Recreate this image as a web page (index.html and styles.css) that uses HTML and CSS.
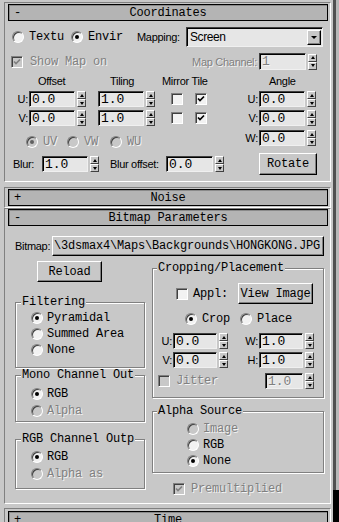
FILE: index.html
```html
<!DOCTYPE html>
<html lang="en">
<head>
  <meta charset="UTF-8">
  <meta name="viewport" content="width=device-width, initial-scale=1.0">
  <title>Bitmap Parameters</title>
  <link rel="stylesheet" href="styles.css">
</head>
<body>
  <div class="panel">
    <!-- Coordinates rollout -->
    <div class="rollout coords">
      <div class="bar"><span class="sign">-</span><span>Coordinates</span></div>

      <div class="row map-row">
        <label class="opt textu"><span class="radio"></span>Textu</label>
        <label class="opt envir"><span class="radio on"></span>Envir</label>
        <span class="lbl mapping">Mapping:</span>
        <div class="combo"><span class="combo-text">Screen</span><span class="combo-btn"></span></div>
      </div>

      <div class="row show-row">
        <label class="opt off show-map"><span class="check"><svg viewBox="0 0 8 8"><path d="M1 3.5 3 5.5 7 1.5"/></svg></span>Show Map on</label>
        <span class="lbl off channel">Map Channel:</span>
        <span class="field off channel-field">1</span>
        <span class="spin"><i></i><i></i></span>
      </div>

      <div class="xform">
        <div class="xform-left">
          <div class="row head-row">
            <span class="lbl head-offset">Offset</span>
            <span class="lbl head-tiling">Tiling</span>
            <span class="lbl">Mirror Tile</span>
          </div>
          <div class="row num-row">
            <span class="lbl axis">U:</span>
            <span class="field offset">0.0</span><span class="spin"><i></i><i></i></span>
            <span class="field tiling">1.0</span><span class="spin"><i></i><i></i></span>
            <span class="check mirror"></span>
            <span class="check tile"><svg viewBox="0 0 8 8"><path d="M1 3.5 3 5.5 7 1.5"/></svg></span>
          </div>
          <div class="row num-row">
            <span class="lbl axis">V:</span>
            <span class="field offset">0.0</span><span class="spin"><i></i><i></i></span>
            <span class="field tiling">1.0</span><span class="spin"><i></i><i></i></span>
            <span class="check mirror"></span>
            <span class="check tile"><svg viewBox="0 0 8 8"><path d="M1 3.5 3 5.5 7 1.5"/></svg></span>
          </div>
          <div class="row off plane-row">
            <label class="opt plane-uv"><span class="radio on"></span>UV</label>
            <label class="opt plane-vw"><span class="radio"></span>VW</label>
            <label class="opt"><span class="radio"></span>WU</label>
          </div>
          <div class="row blur-row">
            <span class="lbl blur-lbl">Blur:</span>
            <span class="field blur">1.0</span><span class="spin"><i></i><i></i></span>
            <span class="lbl blur-offset-lbl">Blur offset:</span>
            <span class="field blur-offset">0.0</span><span class="spin"><i></i><i></i></span>
          </div>
        </div>

        <div class="xform-right">
          <div class="row head-row"><span class="lbl head-angle">Angle</span></div>
          <div class="row num-row">
            <span class="lbl axis angle-axis">U:</span>
            <span class="field angle">0.0</span><span class="spin"><i></i><i></i></span>
          </div>
          <div class="row num-row">
            <span class="lbl axis angle-axis">V:</span>
            <span class="field angle">0.0</span><span class="spin"><i></i><i></i></span>
          </div>
          <div class="row num-row w-row">
            <span class="lbl axis angle-axis">W:</span>
            <span class="field angle">0.0</span><span class="spin"><i></i><i></i></span>
          </div>
          <button class="btn rotate">Rotate</button>
        </div>
      </div>
    </div>

    <!-- Noise rollout (closed) -->
    <div class="rollout noise">
      <div class="bar"><span class="sign">+</span><span>Noise</span></div>
    </div>

    <!-- Bitmap Parameters rollout -->
    <div class="rollout bitmap">
      <div class="bar"><span class="sign">-</span><span>Bitmap Parameters</span></div>

      <div class="row bm-row">
        <span class="lbl bm-lbl">Bitmap:</span>
        <button class="btn path">\3dsmax4\Maps\Backgrounds\HONGKONG.JPG</button>
      </div>

      <div class="bm-cols">
        <div class="bm-left">
          <button class="btn reload">Reload</button>

          <div class="group filtering">
            <div class="group-title">Filtering</div>
            <label class="opt grow"><span class="radio on"></span>Pyramidal</label>
            <label class="opt grow"><span class="radio"></span>Summed Area</label>
            <label class="opt grow"><span class="radio"></span>None</label>
          </div>

          <div class="group mono-out">
            <div class="group-title">Mono Channel Out</div>
            <label class="opt grow tall"><span class="radio on"></span>RGB</label>
            <label class="opt grow tall off"><span class="radio"></span>Alpha</label>
          </div>

          <div class="group rgb-out">
            <div class="group-title">RGB Channel Outp</div>
            <label class="opt grow tall"><span class="radio on"></span>RGB</label>
            <label class="opt grow tall off"><span class="radio"></span>Alpha as</label>
          </div>
        </div>

        <div class="bm-right">
          <div class="group cropping">
            <div class="group-title">Cropping/Placement</div>
            <div class="row apply-row">
              <label class="opt apply"><span class="check"></span>Appl:</label>
              <button class="btn view">View Image</button>
            </div>
            <div class="row crop-row">
              <label class="opt crop"><span class="radio on"></span>Crop</label>
              <label class="opt"><span class="radio"></span>Place</label>
            </div>
            <div class="row num-row crop-num">
              <span class="lbl axis crop-axis">U:</span>
              <span class="field crop-field">0.0</span><span class="spin"><i></i><i></i></span>
              <span class="lbl axis size-axis">W:</span>
              <span class="field crop-field">1.0</span><span class="spin"><i></i><i></i></span>
            </div>
            <div class="row num-row crop-num-v">
              <span class="lbl axis crop-axis">V:</span>
              <span class="field crop-field">0.0</span><span class="spin"><i></i><i></i></span>
              <span class="lbl axis size-axis">H:</span>
              <span class="field crop-field">1.0</span><span class="spin"><i></i><i></i></span>
            </div>
            <div class="row jitter-row">
              <label class="opt off jitter"><span class="check"></span>Jitter</label>
              <span class="field off jitter-field">1.0</span><span class="spin"><i></i><i></i></span>
            </div>
          </div>

          <div class="group alpha-src">
            <div class="group-title">Alpha Source</div>
            <label class="opt arow off"><span class="radio"></span>Image</label>
            <label class="opt arow"><span class="radio"></span>RGB</label>
            <label class="opt arow"><span class="radio on"></span>None</label>
          </div>

          <label class="opt off premult"><span class="check"><svg viewBox="0 0 8 8"><path d="M1 3.5 3 5.5 7 1.5"/></svg></span>Premultiplied</label>
        </div>
      </div>
    </div>

    <!-- Time rollout (closed, cut off) -->
    <div class="rollout time">
      <div class="bar"><span class="sign">+</span><span>Time</span></div>
    </div>
  </div>

  <div class="strip">
    <div class="track"></div>
    <div class="thumb"></div>
  </div>
</body>
</html>
```

FILE: styles.css
```css
body {
  margin: 0;
  width: 339px;
  height: 522px;
  overflow: hidden;
  display: flex;
  background-color: #c8c8c8;
  color: #000;
  font-family: "Liberation Mono", monospace;
  font-size: 12px;
  letter-spacing: -0.2px;
}
.panel {
  width: 331px;
  padding: 2px 0 0 4px;
  box-sizing: border-box;
}
.strip {
  width: 8px;
  padding-left: 2px;
  box-sizing: border-box;
  display: flex;
  flex-direction: column;
}
.track {
  flex: 1;
  border-left: 3px solid #505050;
  background-color: #b8b8b8;
}
.thumb {
  height: 32px;
  background-color: #000;
}

/* rollouts */
.rollout {
  border: 1px solid;
  border-color: #808080 #fff #fff #808080;
  padding: 1px 2px 1px 3px;
}
.coords {
  padding-bottom: 6px;
}
.noise {
  margin-top: 5px;
}
.bitmap {
  padding-top: 0;
  padding-bottom: 6px;
}
.time {
  margin-top: 4px;
  padding-top: 2px;
}
.bar {
  height: 17px;
  box-sizing: border-box;
  border: 1px solid #000;
  background-color: #b4b4b4;
  box-shadow: inset 1px 1px 0 #8a8a8a;
  display: grid;
  grid-template-columns: 1fr auto 1fr;
  align-items: center;
  line-height: 14px;
}
.sign {
  padding-left: 5px;
}

/* generic controls */
.row {
  display: flex;
  align-items: center;
}
.lbl {
  font-family: "Liberation Sans", Arial, sans-serif;
  font-size: 11px;
  letter-spacing: -0.3px;
  white-space: nowrap;
}
.opt {
  display: flex;
  align-items: center;
  gap: 5px;
  white-space: nowrap;
}
.off {
  color: #808080;
  text-shadow: 1px 1px 0 #f4f4f4;
}
.radio {
  flex: none;
  width: 12px;
  height: 12px;
  box-sizing: border-box;
  border-radius: 50%;
  border: 1px solid;
  border-color: #808080 #fff #fff #808080;
  box-shadow: inset 1px 1px 0 #404040;
  background-color: #f2f2f2;
  display: flex;
  align-items: center;
  justify-content: center;
}
.radio.on::after {
  content: "";
  width: 4px;
  height: 4px;
  border-radius: 50%;
  background-color: #000;
}
.off .radio {
  background-color: #c8c8c8;
}
.off .radio.on::after {
  background-color: #606060;
}
.check {
  flex: none;
  width: 12px;
  height: 12px;
  box-sizing: border-box;
  border: 1px solid;
  border-color: #808080 #fff #fff #808080;
  box-shadow: inset 1px 1px 0 #404040;
  background-color: #f2f2f2;
  display: flex;
  align-items: center;
  justify-content: center;
}
.check svg {
  width: 8px;
  height: 8px;
  fill: none;
  stroke: #000;
  stroke-width: 1.7;
}
.off .check {
  background-color: #c8c8c8;
}
.off .check svg {
  stroke: #808080;
}
.field {
  height: 16px;
  box-sizing: border-box;
  border: 1px solid;
  border-color: #404040 #f0f0f0 #f0f0f0 #404040;
  box-shadow: inset 1px 1px 0 #000;
  background-color: #e6e6e6;
  padding-left: 2px;
  font-size: 13px;
  line-height: 15px;
  letter-spacing: 0;
  overflow: hidden;
  white-space: nowrap;
}
.spin {
  flex: none;
  width: 9px;
  height: 16px;
  margin-left: 2px;
  display: flex;
  flex-direction: column;
}
.spin i {
  flex: 1;
  box-sizing: border-box;
  border: 1px solid;
  border-color: #fff #404040 #404040 #fff;
  background-color: #c8c8c8;
  display: flex;
  align-items: center;
  justify-content: center;
}
.spin i::after {
  content: "";
  border-left: 2px solid transparent;
  border-right: 2px solid transparent;
}
.spin i:first-child::after {
  border-bottom: 3px solid #000;
}
.spin i:last-child::after {
  border-top: 3px solid #000;
}
.btn {
  margin: 0;
  padding: 0;
  box-sizing: border-box;
  border: 1px solid;
  border-color: #fff #000 #000 #fff;
  box-shadow: inset -1px -1px 0 #808080;
  background-color: #c8c8c8;
  font: inherit;
  letter-spacing: inherit;
  color: inherit;
  display: flex;
  align-items: center;
  justify-content: center;
  white-space: nowrap;
}
.combo {
  width: 137px;
  height: 20px;
  box-sizing: border-box;
  border: 1px solid;
  border-color: #404040 #f0f0f0 #f0f0f0 #404040;
  box-shadow: inset 1px 1px 0 #000;
  background-color: #e6e6e6;
  padding: 0 1px 0 3px;
  display: flex;
  align-items: center;
  justify-content: space-between;
}
.combo-text {
  font-family: "Liberation Sans", Arial, sans-serif;
  font-size: 12px;
  letter-spacing: -0.4px;
}
.combo-btn {
  width: 14px;
  height: 15px;
  box-sizing: border-box;
  border: 1px solid;
  border-color: #fff #000 #000 #fff;
  box-shadow: inset -1px -1px 0 #808080;
  background-color: #c8c8c8;
  display: flex;
  align-items: center;
  justify-content: center;
}
.combo-btn::after {
  content: "";
  border-left: 3px solid transparent;
  border-right: 3px solid transparent;
  border-top: 3px solid #000;
}

/* coordinates */
.map-row {
  height: 20px;
  margin-top: 6px;
  padding-left: 4px;
}
.textu { width: 59px; }
.envir { width: 66px; }
.mapping { width: 49px; }
.show-row {
  height: 17px;
  margin-top: 6px;
  padding-left: 3px;
}
.show-map {
  width: 179px;
  gap: 7px;
}
.channel {
  width: 69px;
  padding-right: 2px;
  box-sizing: border-box;
  text-align: right;
}
.channel-field {
  width: 47px;
  height: 17px;
}
.xform {
  display: flex;
  margin-top: 4px;
}
.xform-left { width: 227px; }
.xform-right { width: 93px; }
.head-row { height: 14px; }
.xform-left .head-row { padding-left: 30px; }
.head-offset { width: 72px; }
.head-tiling { width: 52px; }
.head-angle { padding-left: 34px; }
.num-row {
  height: 16px;
  margin-top: 3px;
}
.w-row { margin-top: 4px; }
.axis {
  width: 21px;
  padding-right: 1px;
  box-sizing: border-box;
  text-align: right;
}
.angle-axis { width: 24px; }
.offset, .tiling, .angle, .blur { width: 46px; }
.tiling { margin-left: 12px; }
.mirror { margin-left: 16px; }
.tile { margin-left: 12px; }
.plane-row {
  height: 12px;
  margin-top: 10px;
  padding-left: 18px;
}
.plane-uv { width: 41px; }
.plane-vw { width: 43px; }
.blur-row {
  height: 16px;
  margin-top: 8px;
  padding-left: 5px;
}
.blur-lbl { width: 29px; }
.blur-offset-lbl {
  width: 56px;
  margin-left: 11px;
}
.blur-offset { width: 47px; }
.rotate {
  width: 58px;
  height: 22px;
  margin: 7px 0 0 24px;
}

/* bitmap parameters */
.bm-row {
  height: 20px;
  margin-top: 10px;
}
.bm-lbl {
  width: 44px;
  padding-left: 7px;
  box-sizing: border-box;
}
.path {
  width: 272px;
  height: 20px;
  justify-content: flex-start;
  padding-left: 1px;
  overflow: hidden;
}
.bm-cols {
  display: flex;
}
.bm-left { width: 140px; }
.bm-right { width: 180px; }
.reload {
  width: 65px;
  height: 21px;
  margin: 5px 0 0 29px;
}
.group {
  border: 1px solid #808080;
  box-shadow: inset 1px 1px 0 #fff, 1px 1px 0 #fff;
}
.group-title {
  width: fit-content;
  margin: -7px 0 0 4px;
  padding: 0 1px;
  line-height: 13px;
  background-color: #c8c8c8;
}
.bm-left .group {
  width: 128px;
  margin-left: 7px;
}
.bm-left .group-title { margin-left: 5px; }
.grow {
  height: 16px;
  padding-left: 15px;
  gap: 4px;
}
.grow.tall { height: 17px; }
.filtering {
  margin-top: 20px;
  padding-bottom: 9px;
}
.filtering .group-title { margin-bottom: 1px; }
.mono-out {
  margin-top: 7px;
  padding-bottom: 2px;
}
.mono-out .group-title { margin-bottom: 3px; }
.rgb-out {
  margin-top: 17px;
  padding-bottom: 6px;
}
.rgb-out .group-title { margin-bottom: 2px; }

.bm-right .group {
  width: 172px;
  margin-left: 4px;
  box-sizing: border-box;
}
.cropping {
  margin-top: 12px;
  padding-bottom: 8px;
}
.cropping .group-title { margin-bottom: 8px; }
.apply-row {
  height: 21px;
  padding-left: 23px;
}
.apply { width: 62px; }
.view {
  width: 75px;
  height: 21px;
}
.crop-row {
  height: 16px;
  margin-top: 7px;
  padding-left: 32px;
}
.crop { width: 55px; }
.crop-num { margin-top: 6px; }
.crop-axis { width: 20px; }
.size-axis { width: 31px; }
.crop-field { width: 44px; }
.jitter-row {
  height: 16px;
  margin-top: 5px;
  padding-left: 5px;
}
.jitter {
  width: 107px;
  gap: 6px;
}
.jitter-field { width: 38px; }
.alpha-src {
  margin-top: 13px;
  padding-bottom: 3px;
}
.alpha-src .group-title { margin-bottom: 3px; }
.arow {
  height: 16px;
  padding-left: 34px;
  gap: 4px;
}
.premult {
  height: 16px;
  margin-top: 8px;
  padding-left: 25px;
  gap: 6px;
}
```
